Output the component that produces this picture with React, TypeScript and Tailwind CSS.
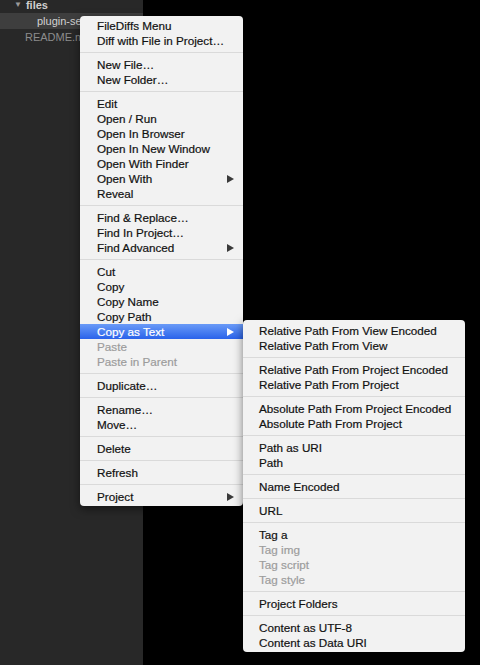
import React from 'react';

type Item = { label: string; disabled?: boolean; submenu?: boolean; active?: boolean };

const mainGroups: Item[][] = [
  [{ label: 'FileDiffs Menu' }, { label: 'Diff with File in Project…' }],
  [{ label: 'New File…' }, { label: 'New Folder…' }],
  [
    { label: 'Edit' },
    { label: 'Open / Run' },
    { label: 'Open In Browser' },
    { label: 'Open In New Window' },
    { label: 'Open With Finder' },
    { label: 'Open With', submenu: true },
    { label: 'Reveal' },
  ],
  [{ label: 'Find & Replace…' }, { label: 'Find In Project…' }, { label: 'Find Advanced', submenu: true }],
  [
    { label: 'Cut' },
    { label: 'Copy' },
    { label: 'Copy Name' },
    { label: 'Copy Path' },
    { label: 'Copy as Text', submenu: true, active: true },
    { label: 'Paste', disabled: true },
    { label: 'Paste in Parent', disabled: true },
  ],
  [{ label: 'Duplicate…' }],
  [{ label: 'Rename…' }, { label: 'Move…' }],
  [{ label: 'Delete' }],
  [{ label: 'Refresh' }],
  [{ label: 'Project', submenu: true }],
];

const subGroups: Item[][] = [
  [{ label: 'Relative Path From View Encoded' }, { label: 'Relative Path From View' }],
  [{ label: 'Relative Path From Project Encoded' }, { label: 'Relative Path From Project' }],
  [{ label: 'Absolute Path From Project Encoded' }, { label: 'Absolute Path From Project' }],
  [{ label: 'Path as URI' }, { label: 'Path' }],
  [{ label: 'Name Encoded' }],
  [{ label: 'URL' }],
  [
    { label: 'Tag a' },
    { label: 'Tag img', disabled: true },
    { label: 'Tag script', disabled: true },
    { label: 'Tag style', disabled: true },
  ],
  [{ label: 'Project Folders' }],
  [{ label: 'Content as UTF-8' }, { label: 'Content as Data URI' }],
];

const Arrow: React.FC<{ white?: boolean }> = ({ white }) => (
  <svg width="7" height="8" viewBox="0 0 7 8" className="shrink-0">
    <polygon points="0,0 7,4 0,8" fill={white ? '#ffffff' : '#3a3a3a'} />
  </svg>
);

const MenuRow: React.FC<{ item: Item; indent: string }> = ({ item, indent }) => (
  <div
    className={`flex items-center justify-between h-[15px] leading-[15px] pr-[9px] ${indent} ${
      item.active
        ? 'bg-gradient-to-b from-[#6a9af7] to-[#2a62ea] text-white'
        : item.disabled
        ? 'text-[#9c9c9c]'
        : 'text-[#111111]'
    }`}
  >
    <span className="whitespace-nowrap [-webkit-text-stroke:0.2px_currentColor]">{item.label}</span>
    {item.submenu && <Arrow white={item.active} />}
  </div>
);

const Menu: React.FC<{ groups: Item[][]; className: string; indent: string }> = ({ groups, className, indent }) => (
  <div
    className={`absolute bg-[#f2f2f2] rounded-[4px] shadow-[0_3px_10px_rgba(0,0,0,0.5)] text-[11.7px] font-['Liberation_Sans',Arial,sans-serif] ${className}`}
  >
    {groups.map((group, gi) => (
      <div key={gi}>
        {gi > 0 && (
          <div className="h-[9px] flex items-center">
            <div className="w-full h-px bg-[#dadada]" />
          </div>
        )}
        {group.map((item) => (
          <MenuRow key={item.label} item={item} indent={indent} />
        ))}
      </div>
    ))}
  </div>
);

export default function App() {
  return (
    <div className="relative w-[480px] h-[665px] flex bg-black overflow-hidden font-['Liberation_Sans',Arial,sans-serif]">
      {/* Sidebar */}
      <div className="w-[143px] h-full bg-[#282828] text-[11px]">
        <div className="flex items-center h-[16px] -mt-[3px] pl-[14px] gap-[4px] text-[#cfcfcf] font-bold">
          <span className="text-[8px] text-[#9a9a9a]">▼</span>
          <span>files</span>
        </div>
        <div className="flex items-center h-[16px] pl-[37px] bg-[#3e3e3e] text-[#d2d2d2]">plugin-settings</div>
        <div className="flex items-center h-[17px] pl-[25px] text-[#8c8c8c]">README.md</div>
      </div>
      <div className="flex-1 h-full bg-black" />

      <Menu groups={mainGroups} className="left-[80px] top-[16px] w-[163px] pt-[2px] pb-[2px]" indent="pl-[17px]" />
      <Menu groups={subGroups} className="left-[243px] top-[320px] w-[222px] pt-[3px] pb-[2px]" indent="pl-[16px]" />
    </div>
  );
}
